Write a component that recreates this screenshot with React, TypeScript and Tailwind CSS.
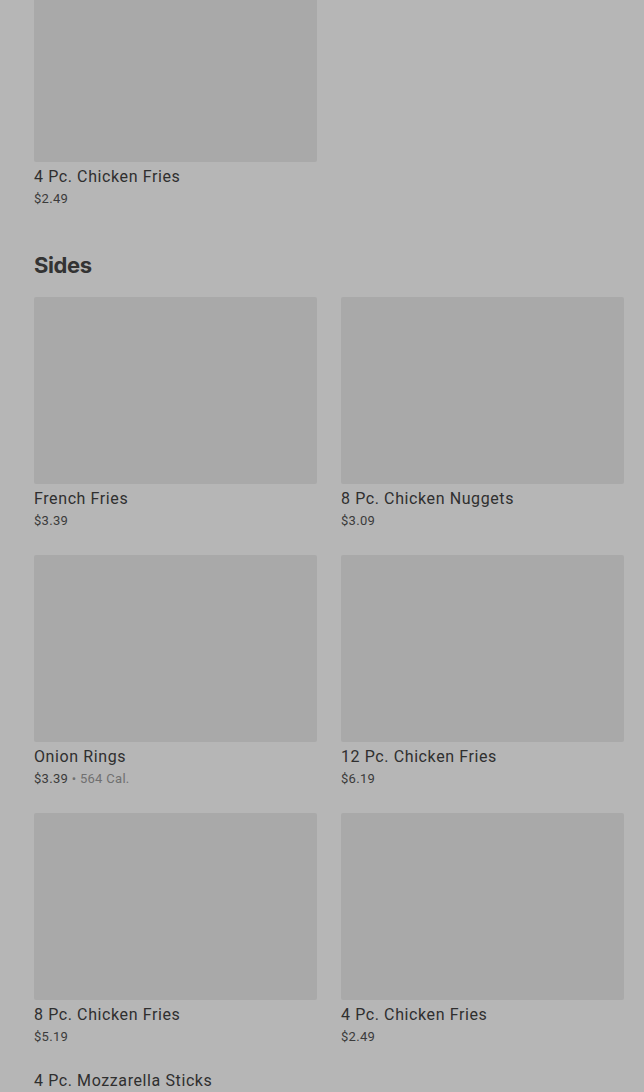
import React from "react";

type Item = { name: string; price: string; cal?: string; noImage?: boolean };

const sides: Item[] = [
  { name: "French Fries", price: "$3.39" },
  { name: "8 Pc. Chicken Nuggets", price: "$3.09" },
  { name: "Onion Rings", price: "$3.39", cal: "564 Cal." },
  { name: "12 Pc. Chicken Fries", price: "$6.19" },
  { name: "8 Pc. Chicken Fries", price: "$5.19" },
  { name: "4 Pc. Chicken Fries", price: "$2.49" },
  { name: "4 Pc. Mozzarella Sticks", price: "$3.59", noImage: true },
];

function Card({ item }: { item: Item }) {
  return (
    <div className="flex flex-col">
      {!item.noImage && <div className="h-[187px] rounded-[2px] bg-[#a9a9a9]" />}
      <div className={`${item.noImage ? "mt-[-2px]" : "mt-[3px]"} text-[16px] leading-[24px] text-[#2f2f2f] tracking-[0.6px]`}>
        {item.name}
      </div>
      <div className="text-[13px] leading-[20px] text-[#3b3b3b] tracking-[0.3px]">
        {item.price}
        {item.cal && (
          <span className="text-[#707070]">
            {" "}• {item.cal}
          </span>
        )}
      </div>
    </div>
  );
}

export default function App() {
  return (
    <div
      className="h-[1092px] overflow-hidden bg-[#b6b6b6] pl-[34px] pr-[20px]"
      style={{ fontFamily: "Roboto, 'Liberation Sans', sans-serif" }}
    >
      <div className="grid grid-cols-2 gap-x-[24px]">
        <div className="mt-[-25px] flex flex-col">
          <div className="h-[187px] rounded-[2px] bg-[#a9a9a9]" />
          <div className="mt-[3px] text-[16px] leading-[24px] text-[#2f2f2f] tracking-[0.6px]">4 Pc. Chicken Fries</div>
          <div className="text-[13px] leading-[20px] text-[#3b3b3b] tracking-[0.3px]">$2.49</div>
        </div>
      </div>
      <h2
        className="mt-[40px] text-[22px] leading-[32px] font-bold text-[#333333] tracking-[-0.4px]"
        style={{ fontFamily: "Inter, 'Liberation Sans', sans-serif" }}
      >
        Sides
      </h2>
      <div className="mt-[16px] grid grid-cols-2 gap-x-[24px] gap-y-[24px]">
        {sides.map((it, i) => (
          <Card key={i} item={it} />
        ))}
      </div>
    </div>
  );
}
